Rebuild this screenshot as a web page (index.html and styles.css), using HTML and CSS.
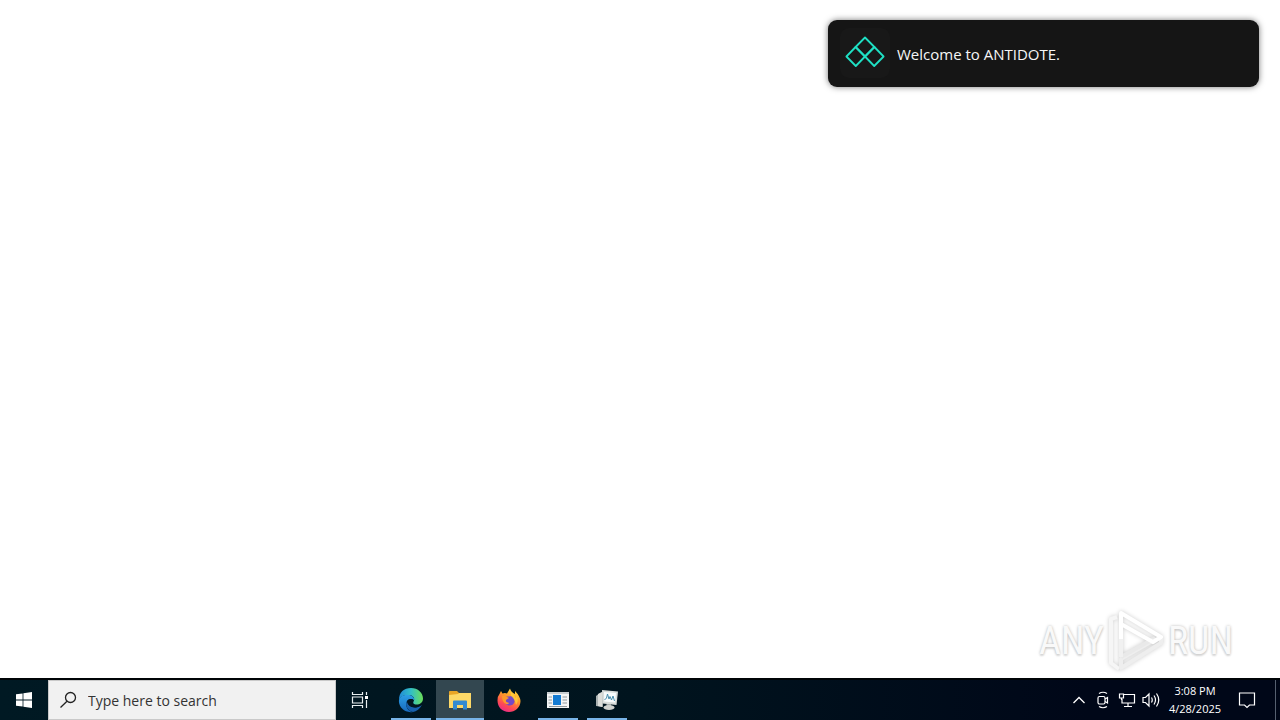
FILE: index.html
```html
<!DOCTYPE html>
<html lang="en">
<head>
<meta charset="utf-8">
<meta name="viewport" content="width=device-width, initial-scale=1">
<title>Desktop</title>
<link rel="stylesheet" href="styles.css">
</head>
<body>
<main class="desktop">
  <section class="toast" role="status">
    <span class="toast-logo">
      <svg width="40" height="32" viewBox="0 0 40 32" fill="none" stroke="#1fe0c4" stroke-width="1.8" stroke-linejoin="round" aria-hidden="true">
        <path d="M20 1.5 29.4 11 20 20.500 10.600 11Z"/>
        <path d="M10.600 11 20 20.500 10.800 30 1.400 20.500Z"/>
        <path d="M29.400 11 38.600 20.500 29.200 30 20 20.500Z"/>
      </svg>
    </span>
    <p class="toast-text">Welcome to ANTIDOTE.</p>
  </section>
  <div class="watermark">
    <span>ANY</span>
    <svg class="watermark-mark" width="58" height="64" viewBox="0 0 58 64" fill="none" stroke="#fff" stroke-width="4" stroke-linejoin="round" aria-hidden="true">
      <path d="M10 8 4 10V54L12 60" stroke="#f6f6f6"/>
      <path d="M54 28V34L14 59V50L49 30" stroke="#eee"/>
      <path d="M14 48 48 29" stroke="#e9e9e9"/>
      <path d="M14 30V48" stroke="#f1f1f1"/>
      <path d="M14 30V4L54 28 46 33 14 15"/>
    </svg>
    <span>RUN</span>
  </div>
</main>
<footer class="taskbar">
  <button class="task start" aria-label="Start">
    <svg width="16" height="16" viewBox="0 0 16 16" fill="#fff" aria-hidden="true"><path d="M0 2.300 6.600 1.400V7.600H0ZM7.400 1.300 16 0V7.600H7.400ZM0 8.400H6.600V14.600L0 13.700ZM7.400 8.400H16V16L7.400 14.700Z"/></svg>
  </button>
  <label class="search">
    <svg width="18" height="18" viewBox="0 0 18 18" fill="none" stroke="#222" stroke-width="1.300" aria-hidden="true"><circle cx="10.500" cy="6.500" r="5"/><path d="M7 10.200 0.500 16.500"/></svg>
    <input class="search-input" type="text" placeholder="Type here to search" aria-label="Type here to search">
  </label>
  <button class="task" aria-label="Task View">
    <svg width="18" height="18" viewBox="0 0 18 18" fill="none" stroke="#e8eef0" stroke-width="1.200" aria-hidden="true"><path d="M1.500 1V3.500H11.500V1M1.500 17V14.500H11.500V17M1.500 6H11.500V12H1.500ZM15.500 1V4M15.500 9V17"/><path d="M14 5H17V8H14Z" fill="#fff" stroke="none"/></svg>
  </button>
  <nav class="apps" aria-label="Applications">
    <button class="app running" aria-label="Microsoft Edge">
      <svg width="26" height="26" viewBox="0 0 26 26" aria-hidden="true">
        <defs>
          <linearGradient id="edge-top" x1="0" y1="0" x2="1" y2="0"><stop stop-color="#218ad8"/><stop offset=".5" stop-color="#32bfc6"/><stop offset="1" stop-color="#6bdf58"/></linearGradient>
          <linearGradient id="edge-low" x1="0" y1="0" x2="0" y2="1"><stop stop-color="#2c9ee5"/><stop offset="1" stop-color="#1869bd"/></linearGradient>
        </defs>
        <path d="M1 13C1 5 6 1 13 1 20 1 25 6 25 11.500 25 16 21 18 17.500 17.500 14.500 17 15 15 16 13.500 17 10 14 8 10 8 5 8 2 10 1 13Z" fill="url(#edge-top)"/>
        <path d="M1 13C2 9 6 7.500 10 8 14 8 17 10.500 16 13.500 15.500 11.500 10 11 8.500 15 7 20 11 25 15 24.900 7 26.500 0 20 1 13Z" fill="url(#edge-low)"/>
        <path d="M9 14C9 17 13 21 18 20.500 21 20.300 23 18.500 24 17.800 22 22 18.500 24.500 15 24.900 9.500 24 6.500 18 9 14Z" fill="#1760ad"/>
        <path d="M9 14Q11 11 15 12.500 16 13.500 15 15 14.500 17 17 18 20 19 23.500 17.500 21 20.500 17 20.500 10 20.500 9 14Z" fill="#03161f"/>
      </svg>
    </button>
    <button class="app running active" aria-label="File Explorer">
      <svg width="22" height="20" viewBox="0 0 22 20" aria-hidden="true">
        <path d="M0 1.500Q0 1 1 1H8L10 3H21Q22 3 22 4V18H0Z" fill="#e9a526"/>
        <path d="M0 5 9 4 10 3H22V18H0Z" fill="#fdd867"/>
        <path d="M4 11.500Q4 10.500 5 10.500H17Q18 10.500 18 11.500V19.500H14V15H8V19.500H4Z" fill="#338bd1"/>
      </svg>
    </button>
    <button class="app" aria-label="Firefox">
      <svg width="24" height="24" viewBox="0 0 24 24" aria-hidden="true">
        <defs><linearGradient id="fox" x1=".8" y1="0" x2=".3" y2="1"><stop stop-color="#ffe340"/><stop offset=".4" stop-color="#ff9a29"/><stop offset=".75" stop-color="#ff4954"/><stop offset="1" stop-color="#e92b89"/></linearGradient></defs>
        <path d="M4 3 5.500 5.500Q8 4.500 10 5.500L13 0.500Q14 4 18 6L18 3Q23 8 23.500 13C23.500 19.500 18 24 12 24 5 24 .5 19 .5 12.500Q.5 8 2.500 6Z" fill="url(#fox)"/>
        <path d="M7 10.500Q8 8 11.500 8.500L15 8Q18 10 17.500 14 16 18 11.500 17.500 7 16.500 7 10.500Z" fill="#7548c7"/>
        <path d="M5 8Q8 7 10.500 9.300L12 10Q10 11 9 12 8.500 14 11 14.500L12 15Q11 17 9 16 5 14 5 8Z" fill="#ff9a29"/>
        <path d="M14 4Q18 7 18.500 10L20 8Q22 13 19 17 18 11 14 8Z" fill="#ffd13b" opacity=".75"/>
      </svg>
    </button>
    <button class="app running" aria-label="Application window">
      <svg width="22" height="16" viewBox="0 0 22 16" aria-hidden="true">
        <path d="M0 0H22V16H0Z" fill="#f3f5f5"/><path d="M0 0H22V2H0Z" fill="#c8ced1"/>
        <path d="M6 3H14V13H6Z" fill="#137bd2"/>
        <path d="M1.500 5H5M1.500 8H5M1.500 11H5M15.500 5H20M15.500 8H20M15.500 11H20M2 14.500H20" stroke="#90999d"/>
      </svg>
    </button>
    <button class="app running" aria-label="System monitor">
      <svg width="24" height="22" viewBox="0 0 24 22" aria-hidden="true">
        <path d="M1 7 5 4 8 3V18L1 17Z" fill="#a9b0b0"/><path d="M3 5 7 3V18L3 17Z" fill="#dbdcd9"/>
        <path d="M7 1 23 2.500 21.500 16 7.500 14.500Z" fill="#d9dddb"/>
        <path d="M9 3 21 4 20 13.500 9.300 12.500Z" fill="#f8fcfd"/>
        <path d="M9.500 11 11.500 9 12.500 5 14 10 15 7.500 16.500 11 18 7 19.500 12" fill="none" stroke="#468cac"/>
        <path d="M11.500 15H16V18H11.500Z" fill="#a6adad"/><ellipse cx="14" cy="18.500" rx="5.500" ry="2.500" fill="#d0d2cf"/>
      </svg>
    </button>
  </nav>
  <div class="tray">
    <button class="tray-button" aria-label="Show hidden icons"><svg width="14" height="10" viewBox="0 0 14 10" fill="none" stroke="#fff" stroke-width="1.300" aria-hidden="true"><path d="M1.500 8 7 2.500 12.500 8"/></svg></button>
    <button class="tray-button" aria-label="Meet Now"><svg width="14" height="18" viewBox="0 0 14 18" fill="none" stroke="#fff" stroke-width="1.200" aria-hidden="true"><rect x="2" y="5.500" width="7" height="7.500" rx="1.500"/><path d="M9 8 11.500 6.500V12L9 10.500M3 2.500Q7 0 11 2.500M3 15.500Q7 18 11 15.500"/></svg></button>
    <button class="tray-button" aria-label="Network"><svg width="18" height="16" viewBox="0 0 18 16" fill="none" stroke="#fff" stroke-width="1.200" aria-hidden="true"><path d="M6 2.500H16.500V11H4V7M10 11V14M6 14.500H14M1.500 2H5.500V6H1.500ZM3.500 6V8"/></svg></button>
    <button class="tray-button" aria-label="Volume"><svg width="18" height="16" viewBox="0 0 18 16" fill="none" stroke="#fff" stroke-width="1.200" aria-hidden="true"><path d="M1 5.500H3.500L7 2V14L3.500 10.500H1ZM9.500 5.500Q11 8 9.500 10.500M12 3.500Q15 8 12 12.500M14.500 1.500Q19 8 14.500 14.500"/></svg></button>
    <button class="clock"><time datetime="2025-04-28T15:08">3:08 PM<br>4/28/2025</time></button>
    <button class="notifications" aria-label="Notifications"><svg width="18" height="18" viewBox="0 0 18 18" fill="none" stroke="#fff" stroke-width="1.200" aria-hidden="true"><path d="M1.500 2H16.500V14H11.500L9 16.500 6.500 14H1.500Z"/></svg></button>
    <button class="show-desktop" aria-label="Show desktop"></button>
  </div>
</footer>
</body>
</html>
```
FILE: styles.css
```css
* { box-sizing: border-box; }
body {
  display: flex;
  flex-direction: column;
  min-height: 100vh;
  margin: 0;
  background: #fff;
  font-family: "Open Sans", "Noto Sans", sans-serif;
}
button {
  padding: 0;
  border: 0;
  background: transparent;
  color: inherit;
  font: inherit;
}
svg { display: block; flex: none; }
.desktop {
  display: flex;
  flex: 1;
  flex-direction: column;
  align-items: flex-end;
  justify-content: space-between;
  padding: 20px 21px 5px;
}
.toast {
  display: flex;
  align-items: center;
  gap: 7px;
  width: 100%;
  max-width: 431px;
  padding: 8px 12px 9px;
  border-radius: 9px;
  background: #151515;
  box-shadow: 0 0 6px #0008;
  color: #f5f5f5;
}
.toast-logo {
  display: grid;
  place-items: center;
  width: 50px;
  height: 50px;
  padding-bottom: 2px;
  border-radius: 9px;
  background: #181818;
}
.toast-text {
  margin: 0;
  padding-top: 2px;
  font-size: 15px;
  line-height: 20px;
}
.watermark {
  display: flex;
  align-items: center;
  gap: 3px;
  margin-right: 26px;
  color: #f9f9f9;
  font: 38px/64px "Liberation Sans Narrow", "Roboto Condensed", "Liberation Sans", sans-serif;
  text-shadow: 0 0 3px #bbb, 0 2px 2px #ddd;
}
.watermark-mark { filter: drop-shadow(0 0 2px #ccc); }
.taskbar {
  display: flex;
  height: 42px;
  border-top: 2px solid #000407;
  background: linear-gradient(90deg, #001923, #00141e 50%, #000718 85%, #000718);
  color: #fff;
}
.task, .app {
  display: grid;
  place-items: center;
  width: 48px;
}
.search {
  display: flex;
  flex: 0 1 288px;
  align-items: center;
  gap: 10px;
  min-width: 0;
  padding: 0 11px;
  border: 1px solid #c9c9c9;
  background: #f1f1f1;
}
.search-input {
  flex: 1;
  min-width: 0;
  padding: 1px 0 0;
  border: 0;
  outline: 0;
  background: transparent;
  color: #222;
  font: 14px/20px "Open Sans", "Noto Sans", sans-serif;
}
.search-input::placeholder { color: #333; opacity: 1; }
.apps {
  display: flex;
  gap: 1px;
  margin-left: 3px;
}
.running {
  background: linear-gradient(#78b4e8, #78b4e8) bottom / 40px 2px no-repeat;
}
.active {
  background: linear-gradient(#78b4e8, #78b4e8) bottom / 100% 2px no-repeat, #334750;
}
.tray {
  display: flex;
  margin-left: auto;
}
.tray-button {
  display: grid;
  place-items: center;
  width: 24px;
}
.clock {
  width: 64px;
  font-size: 11px;
  line-height: 18px;
  text-align: center;
}
.notifications {
  display: grid;
  place-items: center;
  width: 40px;
}
.show-desktop {
  width: 5px;
  margin-left: 8px;
  border-left: 1px solid #566070;
}
```
